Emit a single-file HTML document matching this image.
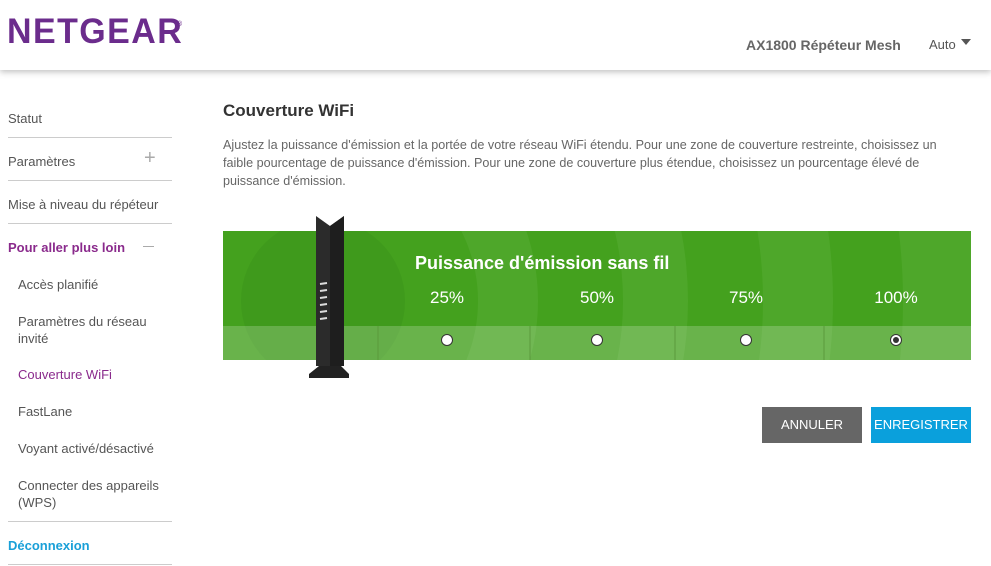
<!DOCTYPE html><html><head><meta charset="utf-8"><style>
html,body{margin:0;width:991px;height:566px;overflow:hidden}
body{background:#fff;font-family:"Liberation Sans",sans-serif;position:relative}
.a{position:absolute;white-space:nowrap}
.hdr{position:absolute;left:0;top:0;width:991px;height:70px;background:#fff;box-shadow:0 2px 6px rgba(0,0,0,.25)}
.ln{position:absolute;left:8px;width:164px;height:1px;background:#ccc}
.nav{font-size:13px;color:#555}
.sub{font-size:13px;color:#555;left:18px}
</style></head><body>
<div class="hdr"></div>
<div class="a" style="left:7px;top:12px;font-size:35px;font-weight:bold;color:#6b2c8c;letter-spacing:1.5px;transform:scaleX(0.97);transform-origin:left">NETGEAR</div>
<div class="a" style="left:177px;top:21px;font-size:7px;color:#6b2c8c">®</div>
<div class="a" style="left:746px;top:37px;font-size:14px;font-weight:bold;color:#666">AX1800 Répéteur Mesh</div>
<div class="a" style="left:929px;top:37px;font-size:13px;color:#555">Auto</div>
<div class="a" style="left:961px;top:39px;width:0;height:0;border-left:5px solid transparent;border-right:5px solid transparent;border-top:6px solid #555"></div>

<div class="a nav" style="left:8px;top:111px">Statut</div><div class="ln" style="top:137px"></div>
<div class="a nav" style="left:8px;top:154px">Paramètres</div><div class="a" style="left:144px;top:147px;font-size:20px;color:#aaa;font-weight:lighter">+</div><div class="ln" style="top:180px"></div>
<div class="a nav" style="left:8px;top:197px">Mise à niveau du répéteur</div><div class="ln" style="top:223px"></div>
<div class="a" style="left:8px;top:240px;font-size:13px;font-weight:bold;color:#8a2a8c">Pour aller plus loin</div><div class="a" style="left:143px;top:246px;width:11px;height:1px;background:#aaa"></div>
<div class="a sub" style="top:277px">Accès planifié</div>
<div class="a sub" style="top:313px;line-height:17px">Paramètres du réseau<br>invité</div>
<div class="a sub" style="top:367px;color:#8a2a8c">Couverture WiFi</div>
<div class="a sub" style="top:404px">FastLane</div>
<div class="a sub" style="top:441px">Voyant activé/désactivé</div>
<div class="a sub" style="top:477px;line-height:17px">Connecter des appareils<br>(WPS)</div>
<div class="ln" style="top:521px"></div>
<div class="a" style="left:8px;top:538px;font-size:13px;font-weight:bold;color:#1aa0d8">Déconnexion</div><div class="ln" style="top:564px"></div>

<div class="a" style="left:223px;top:101px;font-size:17px;font-weight:bold;color:#333">Couverture WiFi</div>
<div class="a" style="left:223px;top:136px;font-size:12.6px;color:#666;line-height:18px;white-space:normal;width:742px">Ajustez la puissance d'émission et la portée de votre réseau WiFi étendu. Pour une zone de couverture restreinte, choisissez un faible pourcentage de puissance d'émission. Pour une zone de couverture plus étendue, choisissez un pourcentage élevé de puissance d'émission.</div>

<svg class="a" style="left:223px;top:231px" width="748" height="129">
<defs><clipPath id="c"><rect width="748" height="129"/></clipPath></defs>
<g clip-path="url(#c)">
<rect width="748" height="129" fill="#44a11e"/>
<circle cx="100" cy="70" r="870" fill="#4ea72a"/>
<circle cx="100" cy="70" r="800" fill="#44a11e"/>
<circle cx="100" cy="70" r="720" fill="#4ea72a"/>
<circle cx="100" cy="70" r="580" fill="#44a11e"/>
<circle cx="100" cy="70" r="510" fill="#4ea72a"/>
<circle cx="100" cy="70" r="440" fill="#44a11e"/>
<circle cx="100" cy="70" r="365" fill="#4ea72a"/>
<circle cx="100" cy="70" r="300" fill="#44a11e"/>
<circle cx="100" cy="70" r="215" fill="#4ea72a"/>
<circle cx="100" cy="70" r="155" fill="#44a11e"/>
<circle cx="100" cy="70" r="82" fill="#3f9a1c"/>
<rect y="95" width="748" height="34" fill="#fff" opacity=".2"/>
<g stroke="#5a9a3c" stroke-width="1"><line x1="155" y1="95" x2="155" y2="129"/><line x1="307" y1="95" x2="307" y2="129"/><line x1="452" y1="95" x2="452" y2="129"/><line x1="601" y1="95" x2="601" y2="129"/></g>
</g>
<text x="192" y="38" font-size="18" font-weight="bold" fill="#fff" font-family="Liberation Sans">Puissance d'émission sans fil</text>
<g font-size="17" fill="#fff" font-family="Liberation Sans" text-anchor="middle"><text x="224" y="72">25%</text><text x="374" y="72">50%</text><text x="523" y="72">75%</text><text x="673" y="72">100%</text></g>
<g fill="#fff" stroke="#333"><circle cx="224" cy="109" r="5.5"/><circle cx="374" cy="109" r="5.5"/><circle cx="523" cy="109" r="5.5"/><circle cx="673" cy="109" r="5.5"/></g>
<circle cx="673" cy="109" r="3" fill="#333"/>
</svg>
<svg class="a" style="left:305px;top:214px" width="50" height="166">
<path d="M11 2 L25 12 L39 2 L39 152 L11 152 Z" fill="#2b2b2b"/>
<path d="M25 12 L39 2 L39 152 L25 152Z" fill="#1e1e1e"/>
<path d="M14 152 L36 152 L44 160 L44 164 L4 164 L4 160 Z" fill="#222"/>
<g stroke="#ddd" stroke-width="2"><line x1="15" y1="70" x2="22" y2="69"/><line x1="15" y1="77" x2="22" y2="76"/><line x1="15" y1="84" x2="22" y2="83"/><line x1="15" y1="91" x2="22" y2="90"/><line x1="15" y1="98" x2="22" y2="97"/><line x1="15" y1="105" x2="22" y2="104"/></g>
</svg>

<div class="a" style="left:762px;top:407px;width:100px;height:36px;background:#666;color:#fff;font-size:13px;text-align:center;line-height:36px">ANNULER</div>
<div class="a" style="left:871px;top:407px;width:100px;height:36px;background:#0aa0dc;color:#fff;font-size:13px;text-align:center;line-height:36px">ENREGISTRER</div>
</body></html>
